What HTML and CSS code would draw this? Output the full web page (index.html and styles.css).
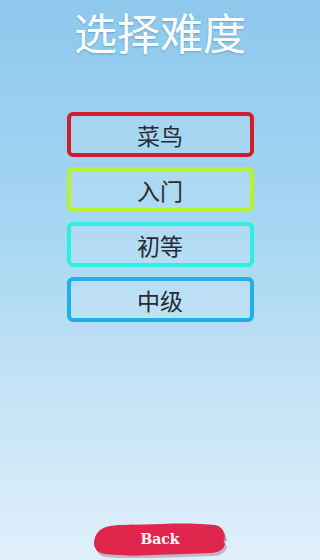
FILE: index.html
```html
<!DOCTYPE html>
<html lang="zh">
<head>
<meta charset="utf-8">
<title>选择难度</title>
<link rel="stylesheet" href="styles.css">
</head>
<body>
<div class="screen">
  <h1 class="title">选择难度</h1>
  <div class="levels">
    <button class="level red">菜鸟</button>
    <button class="level lime">入门</button>
    <button class="level cyan">初等</button>
    <button class="level blue">中级</button>
  </div>
  <div class="back">
    <svg class="brush" width="134" height="36" viewBox="0 0 134 36">
      <path d="M6 10 C10 6 18 4 30 4 L70 3 C90 2 110 3 122 4 C128 5 131 8 132 12 L133 16 L131 19 L133 23 C132 28 128 31 120 32 L60 34 C40 35 20 34 12 33 C5 32 2 28 2 22 C2 17 3 13 6 10 Z" fill="#8a4a5e" opacity="0.35" transform="translate(1,2)"/>
      <path d="M6 9 C10 5 18 3 30 3 L70 2 C90 1 110 2 122 3 C127 4 130 7 131 11 L132 15 L130 18 L132 22 C131 27 127 30 119 31 L60 33 C40 34 20 33 12 32 C5 31 1 27 1 21 C1 16 3 12 6 9 Z" fill="#e0264c"/>
      <path d="M20 4 L40 2.6 L38 3.6 Z M96 2.2 L116 2.6 L100 3.2 Z M129 16 L133 17 L130 19 Z M30 33 L50 33.6 L34 32.6 Z" fill="#e0264c"/>
    </svg>
    <span class="back-label">Back</span>
  </div>
</div>
</body>
</html>
```
FILE: styles.css
```css
* { box-sizing: border-box; }
html, body { margin: 0; padding: 0; }
body {
  width: 315px;
  height: 560px;
  overflow: hidden;
  background: linear-gradient(to bottom, #8dc8ed 0%, #a6d6f2 40%, #c4e3f6 70%, #e0f0fb 100%);
  font-family: "Noto Sans CJK SC", "Noto Sans", sans-serif;
}
.screen {
  height: 560px;
  padding-left: 5px;
  display: flex;
  flex-direction: column;
  align-items: center;
}
.title {
  margin: 0;
  font-size: 43px;
  line-height: 62px;
  font-weight: 400;
  color: #ffffff;
  letter-spacing: 0;
  text-shadow: 0 1px 2px rgba(60, 110, 150, 0.45);
}
.levels {
  margin-top: 50px;
  display: flex;
  flex-direction: column;
  gap: 10px;
}
.level {
  width: 187px;
  height: 45px;
  margin: 0;
  padding: 0;
  border: 4px solid;
  border-radius: 6px;
  background: rgba(255, 255, 255, 0.12);
  font-family: "Noto Sans CJK SC", sans-serif;
  font-size: 23px;
  line-height: 36px;
  color: #262b33;
  text-align: center;
}
.red { border-color: #d21c2c; }
.lime { border-color: #b6f22e; }
.cyan { border-color: #2cefe2; }
.blue { border-color: #1eb0e6; }
.back {
  margin-top: auto;
  margin-bottom: 2px;
  display: grid;
  place-items: center;
}
.brush, .back-label { grid-area: 1 / 1; }
.brush { display: block; }
.back-label {
  font-family: "DejaVu Serif", "Liberation Serif", serif;
  font-weight: 700;
  font-size: 14px;
  color: #ffffff;
  margin-top: -2px;
}
```
